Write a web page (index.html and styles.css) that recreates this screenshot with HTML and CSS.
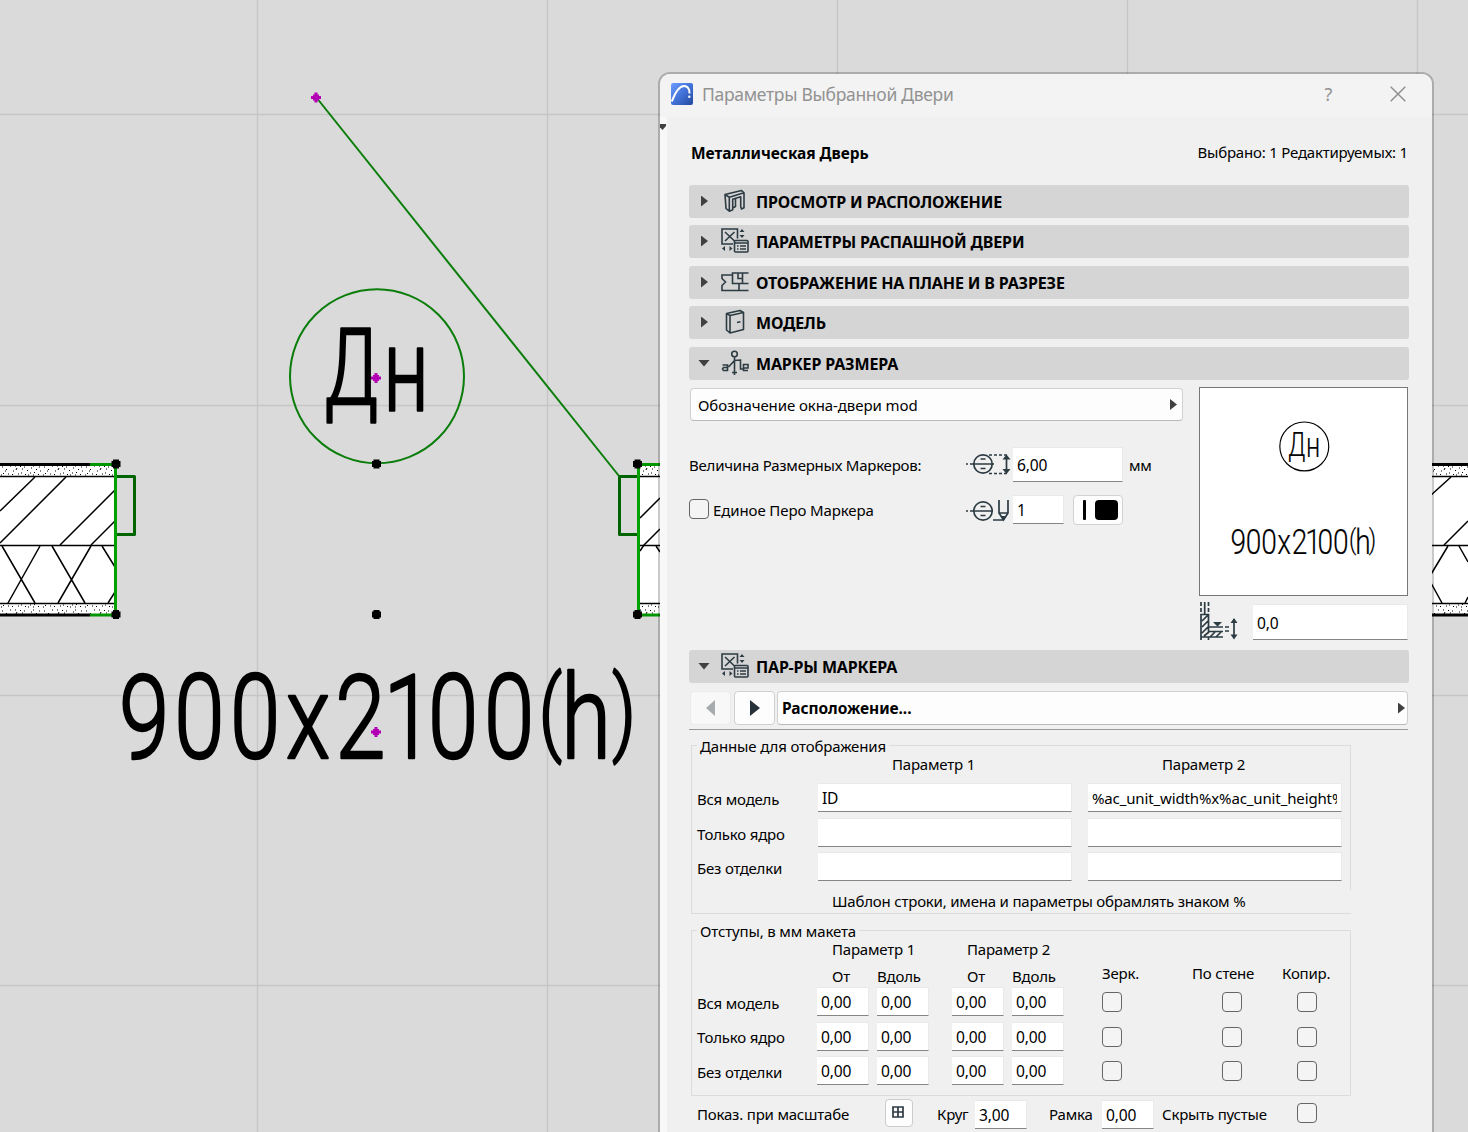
FILE: index.html
```html
<!DOCTYPE html>
<html lang="ru">
<head>
<meta charset="utf-8">
<title>Параметры Выбранной Двери</title>
<link rel="stylesheet" href="styles.css">
</head>
<body>
<svg class="plan" width="1468" height="1132" viewBox="0 0 1468 1132">
  <defs>
    <pattern id="plaster" width="42" height="12" patternUnits="userSpaceOnUse" y="465">
      <path d="M2 2h1M6 4l1 1M10 1h1M13 6h1M17 3l-1 2M21 8h1M24 2h1M27 5l1 1M31 3h1M35 7l-1 1M39 2h1M3 8l1 1M8 9h1M12 10l1-1M18 9h1M25 9l1 1M30 8h1M38 9l1 1M5 6h1M15 1h1M22 4h1M33 1h1M36 4l1 1M40 6h1M28 10h1M20 1l1 1M1 10h1M33 10h1" stroke="#000" stroke-width="1" fill="none"/>
    </pattern>
    <g id="dot"><path d="M-3-4.500H3V-3H4.500V3H3V4.500H-3V3H-4.500V-3H-3Z"/></g>
    <g id="hot"><path d="M-1.500-5H1.500V-3H3V-1.500H5V1.500H3V3H1.500V5H-1.500V3H-3V1.500H-5V-1.500H-3V-3H-1.500Z" fill="#b400b4"/></g>
  </defs>
  <path d="M257.500 0V1132M547.500 0V1132M837.500 0V1132M1127.500 0V1132M1417.500 0V1132M0 114.500H1468M0 405.500H1468M0 695.500H1468M0 985.500H1468" stroke="#c6c6c6" stroke-width="1.300"/>
  <g fill="#fff"><path d="M0 464H115V615H0ZM639 464H660V615H639ZM1430 464H1468V615H1430Z"/></g>
  <g fill="url(#plaster)"><path d="M0 466H114V476H0ZM0 604H114V614H0ZM640 466H660V476H640ZM640 604H660V614H640ZM1430 466H1468V476H1430ZM1430 604H1468V614H1430Z"/></g>
  <g stroke="#000" stroke-width="1.500" fill="none">
    <path d="M0 476.500H115M0 545.500H115M0 603.500H115M639 476.500H660M639 545.500H660M639 603.500H660M1430 476.500H1468M1430 545.500H1468M1430 603.500H1468"/>
    <path d="M0 511L35 477M0 543L66 477M60 545L115 490M91 545L115 521M2 546L35 603M40 546L8 603M52 546L85 603M91 546L58 603M102 546L115 567M108 603L115 592"/>
    <path d="M640 518L660 498M640 551L644 545L660 529M656 546L660 552M1430 496L1451 477M1444 545L1468 521M1430 576L1448 546M1459 546L1468 562M1431 583L1442 603M1465 603L1468 597"/>
  </g>
  <path d="M0 464.500H90M0 615H90M1430 464.500H1468M1430 615H1468" stroke="#000" stroke-width="3"/>
  <path d="M90 464.500H115M90 615H115M638 464.500H660M638 615H660" stroke="#009600" stroke-width="3"/>
  <path d="M117 476.500H134.500V534.500H117M637 476.500H619.500V534.500H637" stroke="#006400" stroke-width="3" stroke-linejoin="round" fill="none"/>
  <path d="M115.500 464V614M638.500 464V614" stroke="#00a000" stroke-width="3"/>
  <g fill="none" stroke="#0a7d0a" stroke-width="2"><path d="M316 97L619 476"/><circle cx="377" cy="376.300" r="87"/></g>
  <use href="#dot" x="116" y="464"/><use href="#dot" x="116" y="614.500"/>
  <use href="#dot" x="637.500" y="464"/><use href="#dot" x="637.500" y="614.500"/>
  <use href="#dot" x="376.500" y="464"/><use href="#dot" x="376.500" y="614.500"/>
  <g class="cad outline" font-size="116">
    <text transform="scale(.7 1)" y="410" x="502 580"><tspan font-size="105" dy="-6">Д</tspan><tspan dy="6">н</tspan></text>
    <text transform="scale(.78 1)" y="758.500" x="184.600 255.700 327.200 395 462 524 581 652.800"><tspan>900x2100</tspan><tspan font-size="93" x="705.600" y="743">(</tspan><tspan x="751.300" y="758.500">h</tspan><tspan font-size="93" x="800" y="743">)</tspan></text>
  </g>
  <use href="#hot" x="316" y="97.500"/><use href="#hot" x="376" y="378"/><use href="#hot" x="376" y="732"/>
</svg>

<svg class="sprite" width="0" height="0">
  <symbol id="i-params" viewBox="0 0 28 26"><g fill="none" stroke="#2d3b43" stroke-width="1.600"><path d="M12 16H1V1H16.500V10.500M4 4l9.500 9M13.500 4L4 13"/><rect x="13.500" y="12.500" width="13.500" height="11.500" rx="1"/><path d="M13.500 15H27M16 18h1.500M19 18h6M16 21h1.500M19 21h6"/></g><path d="M18.500 4l2.500-3 2.500 3zM18.500 7l2.500 3 2.500-3zM4 18v5l-3-2.500zM8.500 18v5l3-2.500z" fill="#2d3b43"/></symbol>
</svg>

<main class="dialog">
  <header class="titlebar">
    <svg class="logo" viewBox="0 0 22 22"><defs><linearGradient id="lg" x2="1" y2="1"><stop offset="0" stop-color="#6d9dff"/><stop offset=".5" stop-color="#4272d8"/><stop offset="1" stop-color="#23489d"/></linearGradient></defs><rect width="22" height="22" rx="2" fill="url(#lg)"/><path d="M.8 18.500C4 10 8 3 13 3c4 0 5.500 3 5.500 7.500" fill="none" stroke="#fff" stroke-width="2"/><circle cx="18.300" cy="13.800" r="1.200" fill="#fff"/></svg>
    <span class="title">Параметры Выбранной Двери</span>
    <span class="help">?</span>
    <svg class="close" viewBox="0 0 16 16"><path d="M.7.7l14.600 14.600M15.300.7L.7 15.300" stroke="#8c8c8c" stroke-width="1.400"/></svg>
  </header>
  <div class="frame">
  <div class="gutter"><svg width="7" height="6"><path d="M0 0H7V2L3.500 6 0 2Z" fill="#404040"/></svg></div>
  <div class="content">
    <div class="summary"><b>Металлическая Дверь</b><span>Выбрано: 1 Редактируемых: 1</span></div>

    <div class="bar"><i class="tri"></i>
      <svg viewBox="0 0 28 26"><g fill="none" stroke="#2d3b43" stroke-width="1.600" stroke-linejoin="round"><path d="M4 6.500L20.500 2.500 23 4.800 8.300 9.200ZM4 6.500L5 20.500 8.300 23.200V9.200M8.300 23.200L11.700 21.800V11.200L19.700 8.800V18.500L20.500 21 23 19.800V4.800M11.700 20L14.500 18.500V10.500"/></g></svg><b>ПРОСМОТР И РАСПОЛОЖЕНИЕ</b></div>
    <div class="bar g7"><i class="tri"></i><svg viewBox="0 0 28 26"><use href="#i-params"/></svg><b>ПАРАМЕТРЫ РАСПАШНОЙ ДВЕРИ</b></div>
    <div class="bar g8"><i class="tri"></i>
      <svg viewBox="0 0 28 26"><g fill="none" stroke="#2d3b43" stroke-width="1.600"><path d="M11.500 6H1V9.500L4.500 13 1 16.500V21.500H27.500M27.500 4H11.500V14.500H27.500M21.500 4V14.500M18 14.500V21.500M17 4V9.500H21.500"/></g></svg><b>ОТОБРАЖЕНИЕ НА ПЛАНЕ И В РАЗРЕЗЕ</b></div>
    <div class="bar g7"><i class="tri"></i>
      <svg viewBox="0 0 28 26"><g fill="none" stroke="#2d3b43" stroke-width="1.600" stroke-linejoin="round"><path d="M5.500 4.500L9 6.500V24L5.500 21zM5.500 4.500L19 1.500l3.500 2L9 6.500M22.500 3.500V20.500L9 24M16 13.500l3.500-.8"/></g></svg><b>МОДЕЛЬ</b></div>
    <div class="bar g8"><i class="tri down"></i>
      <svg viewBox="0 0 28 26"><g fill="none" stroke="#2d3b43" stroke-width="1.600"><circle cx="13.500" cy="4" r="2.800"/><path d="M13.500 7V25M11 22.500h5M7.500 17L13.500 10.500l6-.5V19h2.500M1.500 15H6.500V20.500H2.500L1.500 19l1-1.500h4M22 18H27V14.500H22.500V20.500H27"/></g></svg><b>МАРКЕР РАЗМЕРА</b></div>

    <section class="marker">
      <div class="marker-left">
        <div class="select"><span class="wide">Обозначение окна-двери mod</span><i class="tri"></i></div>
        <div class="mrow size"><span class="lab">Величина Размерных Маркеров:</span>
          <svg width="46" height="24" viewBox="0 0 46 24"><g fill="none" stroke="#2d3b43" stroke-width="1.700"><circle cx="18" cy="12" r="9.200"/><path d="M1 12h2M5 12h24M15.500 7h5M15.500 16.500h5"/><path d="M24 3h18M24 21.500h18" stroke-dasharray="3 2"/><path d="M41.500 5v15"/></g><path d="M37.500 7.500l4-5 4 5zM37.500 17l4 5 4-5z" fill="#2d3b43"/></svg>
          <span class="field">6,00</span><span class="unit">мм</span></div>
        <div class="mrow pen"><i class="check"></i><span class="lab">Единое Перо Маркера</span>
          <svg width="46" height="24" viewBox="0 0 46 24"><g fill="none" stroke="#2d3b43" stroke-width="1.700"><circle cx="18" cy="13" r="9.200"/><path d="M1 13h2M5 13h22M15.500 8.500h5M15.500 17.500h5M28 22h11M34 2V15l4.500 7 4.500-7V2M34 15h9"/></g><path d="M36 18h5l-2.500 5z" fill="#2d3b43"/></svg>
          <span class="field">1</span><span class="swatch"><i></i><b></b></span></div>
      </div>
      <div class="marker-right">
        <svg class="preview" width="209" height="209" viewBox="1199 387 209 209"><circle cx="1304.300" cy="446" r="24.700" fill="none" stroke="#000" stroke-width="1.200"/><g class="cad thin" font-size="35.500"><text transform="scale(.72 1)" y="456.500" x="1801 1824"><tspan font-size="33" dy="-1">Д</tspan><tspan dy="1">н</tspan></text><text transform="scale(.8 1)" y="554.500" x="1547 1566.500 1586 1605 1624.500 1641.500 1657 1676.500"><tspan>900x2100</tspan><tspan font-size="28.500" x="1691.500" y="549.500">(</tspan><tspan x="1704.500" y="554.500">h</tspan><tspan font-size="28.500" x="1716.500" y="549.500">)</tspan></text></g></svg>
        <div class="level">
          <svg width="40" height="40" viewBox="0 0 40 40"><g fill="none" stroke="#2d3b43" stroke-width="1.700"><path d="M2 0v12M9.500 0v12" stroke-dasharray="4 2"/><path d="M5.700 0V12M2 38V12.500H9.500V29.500H24M9.500 25H24M2 35H24M9.500 35v3M3 19l6-6M3 25l6-6M3 31l7-7M5 34l5-4M11 35l5-5M17 35l5-5M26 25h4M26 29h4M35 17V36"/></g><path d="M14 20h9l-4.500 4.500zM31.500 21l3.500-5 3.500 5zM31.500 32.500l3.500 5 3.500-5z" fill="#2d3b43"/></svg>
          <span class="field">0,0</span></div>
      </div>
    </section>

    <div class="bar"><i class="tri down"></i><svg viewBox="0 0 28 26"><use href="#i-params"/></svg><b>ПАР-РЫ МАРКЕРА</b></div>
    <nav class="pager"><span class="btn off"><svg width="9" height="16"><path d="M9 0V16L0 8Z" fill="#a6abae"/></svg></span><span class="btn"><svg width="10" height="16"><path d="M0 0V16L10 8Z" fill="#263038"/></svg></span><span class="select"><b>Расположение...</b><i class="tri"></i></span></nav>

    <section class="group data">
      <h3>Данные для отображения</h3>
      <div class="grid">
        <span></span><span class="p">Параметр 1</span><span class="p">Параметр 2</span>
        <label>Вся модель</label><span class="field">ID</span><span class="field"><em>%ac_unit_width%x%ac_unit_height%</em></span>
        <label>Только ядро</label><span class="field"></span><span class="field"></span>
        <label>Без отделки</label><span class="field"></span><span class="field"></span>
      </div>
      <p>Шаблон строки, имена и параметры обрамлять знаком %</p>
    </section>

    <section class="group offsets">
      <h3>Отступы, в мм макета</h3>
      <div class="heads"><span>Параметр 1</span><span>Параметр 2</span></div>
      <div class="row sub"><span></span><span>От</span><span>Вдоль</span><span>От</span><span>Вдоль</span><span class="up">Зерк.</span><span class="up">По стене</span><span class="up">Копир.</span></div>
      <div class="row"><label>Вся модель</label><span class="field">0,00</span><span class="field">0,00</span><span class="field">0,00</span><span class="field">0,00</span><i class="check"></i><i class="check k2"></i><i class="check k3"></i></div>
      <div class="row r2"><label>Только ядро</label><span class="field">0,00</span><span class="field">0,00</span><span class="field">0,00</span><span class="field">0,00</span><i class="check"></i><i class="check k2"></i><i class="check k3"></i></div>
      <div class="row r3"><label>Без отделки</label><span class="field">0,00</span><span class="field">0,00</span><span class="field">0,00</span><span class="field">0,00</span><i class="check"></i><i class="check k2"></i><i class="check k3"></i></div>
    </section>

    <div class="footer"><span>Показ. при масштабе</span><span class="gridbtn"><svg width="12" height="12"><path d="M1 1H11V11H1ZM6 1V11M1 6H11" fill="none" stroke="#2d3b43" stroke-width="1.700"/></svg></span><span>Круг</span><span class="field">3,00</span><span>Рамка</span><span class="field">0,00</span><span>Скрыть пустые</span><i class="check"></i></div>
  </div>
  </div>
</main>
</body>
</html>
```

FILE: styles.css
```css
* { box-sizing: border-box; }
body { margin: 0; width: 1468px; height: 1132px; overflow: hidden; position: relative; background: #dadada; font: 15px/20px "Noto Sans", "Open Sans", sans-serif; color: #000; letter-spacing: -.2px; }
svg { display: block; flex: none; }
span, b, label, h3, p { white-space: nowrap; }
.plan { position: absolute; left: 0; top: 0; }
.sprite { position: absolute; }
.cad { font-family: Roboto, sans-serif; font-weight: 300; text-anchor: middle; letter-spacing: 0; }
.outline { stroke: #000; stroke-width: 2.6px; stroke-linejoin: round; }
.thin { stroke: #000; stroke-width: .2px; }

/* dialog window */
.dialog { position: absolute; left: 658px; top: 72px; width: 776px; height: 1080px; border: 2px solid rgba(0, 0, 0, .21); border-radius: 12px; background: #f0f0f0; background-clip: padding-box; overflow: hidden; }
.titlebar { height: 43px; background: #f3f3f3; display: flex; align-items: center; padding: 0 27px 3px 11px; color: #929292; }
.logo { width: 22px; height: 22px; margin-right: 9px; }
.title { font-size: 17.5px; letter-spacing: -.3px; }
.help { margin-left: auto; margin-right: 58px; font-size: 18px; }
.close { width: 16px; height: 16px; margin-right: -1px; }
.frame { display: flex; height: 1040px; }
.gutter { width: 7px; background: #f8f8f8; padding-top: 7px; }
.gutter svg { margin-left: -1px; }
.content { width: 765px; padding: 0 23px 0 22px; }
.summary { display: flex; justify-content: space-between; height: 68px; padding: 25px 1px 0 2px; }
.summary b { padding-top: 1px; }
.summary b, .pager b { font-size: 15.5px; letter-spacing: -.05px; }

/* section headings */
.bar { height: 33px; background: #d5d5d5; border-radius: 3px; display: flex; align-items: center; }
.bar svg { width: 28px; height: 26px; margin-left: 13px; margin-right: 7px; margin-top: -1px; }
.bar b { font-size: 16px; letter-spacing: -.16px; padding-top: 1px; }
.g7 { margin-top: 7px; }
.g8 { margin-top: 8px; }
.tri { width: 7px; height: 11px; background: #404040; clip-path: polygon(0 0, 100% 50%, 0 100%); flex: none; }
.bar .tri { margin-left: 12px; margin-top: -1px; }
.bar .down { width: 12px; height: 7px; clip-path: polygon(0 0, 100% 0, 50% 100%); margin-left: 9px; margin-right: -2px; }

/* controls */
.select { display: flex; align-items: center; justify-content: space-between; height: 34px; background: #fdfdfd; border: 1px solid #d0d0d0; border-bottom-color: #b9b9b9; border-radius: 4px; }
.field { display: block; background: #fff; border: 1px solid #e9e9e9; border-left: 0; border-bottom: 1px solid #858585; height: 29px; line-height: 28px; padding: 0 4px; overflow: hidden; font-size: 15.6px; }
.field em { display: block; overflow: hidden; font-style: normal; font-size: 15px; letter-spacing: -.13px; }
.check { display: block; width: 20px; height: 20px; border: 1px solid #666; border-radius: 4px; background: #f4f4f4; flex: none; }

.marker { display: flex; height: 270px; padding-top: 7px; }
.marker-left { width: 494px; padding-left: 1px; margin-right: 16px; padding-top: 1px; }
.marker-left .select { padding: 0 5px 0 7px; height: 33px; }
.wide { letter-spacing: -.08px; }
.mrow { display: flex; align-items: center; margin-left: -1px; }
.size { height: 36px; margin-top: 25px; }
.size .lab { width: 276px; letter-spacing: -.23px; padding-top: 1px; }
.size .field { width: 110px; height: 35px; line-height: 34px; margin-left: 2px; }
.unit { margin-left: 6px; padding-top: 1px; }
.pen { height: 30px; margin-top: 13px; }
.pen .check { margin-top: -3px; }
.pen .lab { margin-left: 4px; width: 252px; letter-spacing: -.1px; }
.pen .field { width: 51px; margin-left: 2px; margin-top: -1px; }
.swatch { display: flex; align-items: center; width: 50px; height: 30px; margin-left: 9px; padding-left: 9px; background: #fdfdfd; border: 1px solid #d2d2d2; border-radius: 4px; gap: 9px; }
.swatch i { width: 3px; height: 20px; background: #000; border-radius: 1px; }
.swatch b { width: 23px; height: 20px; background: #000; border-radius: 4px; }
.preview { background: #fff; border: 1px solid #777; }
.level { display: flex; width: 209px; justify-content: space-between; margin-top: 6px; }
.level .field { width: 155px; height: 36px; line-height: 36px; margin-top: 2px; }

.pager { display: flex; gap: 2px; height: 47px; padding: 8px 0 0 1px; border-bottom: 1px solid #999; width: 719px; }
.btn { width: 41px; height: 34px; background: #fdfdfd; border: 1px solid #cfcfcf; border-radius: 4px; display: flex; align-items: center; justify-content: center; }
.off { background: #f8f8f8; border-color: #eaeaea; margin-right: 1px; padding-right: 1px; }
.pager .select { flex: 1; padding: 0 2px 0 4px; }

.group { width: 660px; margin-left: 2px; border: 1px solid #dcdcdc; padding-left: 5px; }
.group h3 { font-weight: 400; font-size: inherit; margin: -10px 0 0 0; padding: 0 3px; background: #f0f0f0; width: max-content; height: 20px; letter-spacing: -.15px; }
.data { height: 169px; margin-top: 15px; border-right: 0; background: linear-gradient(#dcdcdc, #dcdcdc) right top / 1px 144px no-repeat; }
.data .grid { display: grid; grid-template-columns: 105px 253px 253px; grid-template-rows: 29px 35px 34px 29px; column-gap: 17px; align-content: start; margin-top: -2px; }
.data .grid span:not(.p) { margin-left: -1px; }
.data .grid .p { padding-left: 73px; }
.data label { padding-top: 6px; }
.data p { margin: 10px 0 0 135px; }

.offsets { height: 166px; margin-top: 16px; }
.heads { display: flex; margin: -2px 0 0 135px; }
.heads span { width: 135px; }
.row { display: grid; grid-template-columns: 120px 60px 75px 60px 90px 90px 90px 60px; height: 29px; }
.row .field { width: 52px; }
.row label { padding-top: 6px; }
.sub { height: 28px; padding-top: 7px; }
.sub span:nth-child(2), .sub span:nth-child(4) { padding-left: 15px; }
.sub .up { margin-top: -3px; }
.row .check { margin-top: 5px; }
.row .k2 { margin-left: 30px; }
.row .k3 { margin-left: 15px; }
.r2 { margin-top: 6px; }
.r3 { margin-top: 5px; }
.r2 label { padding-top: 5px; }

.footer { display: grid; grid-template-columns: 188px 52px 38px 74px 53px 60px 135px 20px; align-items: center; padding: 2px 0 0 8px; height: 34px; }
.gridbtn { width: 28px; height: 28px; border: 1px solid #ccc; border-radius: 4px; background: #fdfdfd; padding: 6px; margin-top: -2px; }
.footer .field { width: 52px; line-height: 28px; margin-top: 1px; }
.footer .check { margin-top: -3px; }
```
